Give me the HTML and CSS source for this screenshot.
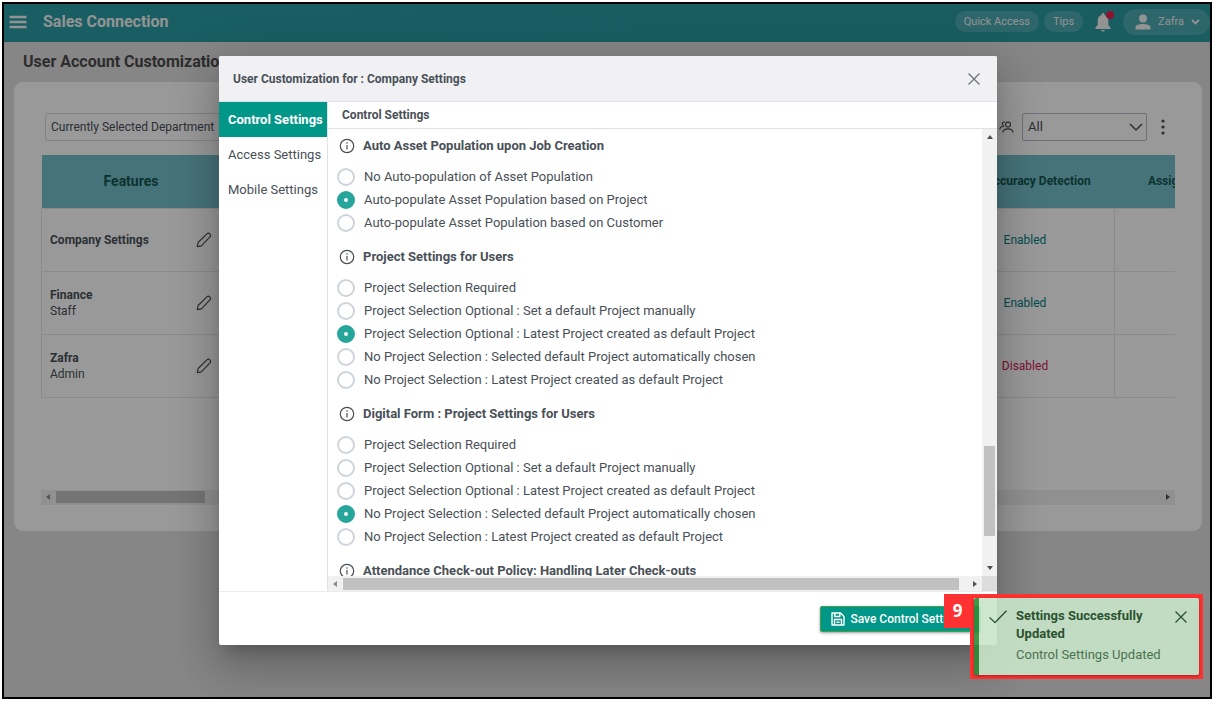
FILE: index.html
```html
<!DOCTYPE html>
<html lang="en">
<head>
<meta charset="utf-8">
<title>Sales Connection</title>
<link rel="stylesheet" href="styles.css">
</head>
<body>
<div class="frame">
  <header class="topbar">
    <button class="icon-btn" aria-label="Menu">
      <svg width="18" height="14" viewBox="0 0 18 14" stroke="currentColor" stroke-width="2.400"><path d="M.5 2h17M.5 7h17M.5 12h17"/></svg>
    </button>
    <span class="brand">Sales Connection</span>
    <nav class="top-actions">
      <button class="pill">Quick Access</button>
      <button class="pill">Tips</button>
      <button class="icon-btn bell" aria-label="Notifications">
        <svg width="18" height="20" viewBox="0 0 18 20" fill="currentColor"><path d="M9 1c.9 0 1.400.6 1.400 1.300v.8c2.600.6 3.900 2.800 3.900 5.400v4.500l2.200 2.500V17h-15v-1.500L3.700 13V8.500c0-2.600 1.300-4.800 3.900-5.400v-.8C7.600 1.600 8.100 1 9 1zM7.200 18h3.600a1.800 1.600 0 0 1-3.600 0z"/></svg>
        <span class="bell-dot"></span>
      </button>
      <button class="pill user">
        <svg width="16" height="16" viewBox="0 0 16 16" fill="currentColor"><circle cx="8" cy="4.500" r="4"/><path d="M0.500 15.500v-2C.5 10.800 4.500 10 8 10s7.500.8 7.500 3.500v2z"/></svg>
        <span>Zafra</span>
        <svg width="9" height="6" viewBox="0 0 9 6" fill="none" stroke="currentColor" stroke-width="1.800"><path d="M1 1l3.500 3.500L8 1"/></svg>
      </button>
    </nav>
  </header>

  <main class="page">
    <h1 class="page-title">User Account Customization</h1>
    <section class="card">
      <div class="filters">
        <button class="department">Currently Selected Department</button>
        <div class="filter-right">
          <svg class="people" width="15" height="13" viewBox="0 0 15 13" fill="none" stroke="currentColor" stroke-width="1.100"><circle cx="9" cy="3.600" r="2.500"/><path d="M3.600 11.500c.6-2.400 2.700-3.600 5.300-3.600s4.700 1.200 5.300 3.600M6 1.200C4.600.5 3.200 1.300 3.200 2.700c0 1 .7 1.800 1.800 2M.6 8.300C1 6.500 2.600 5.300 4.800 5.500"/></svg>
          <div class="select-wrap">
            <select class="select" aria-label="Users"><option>All</option></select>
            <svg class="select-arrow" width="14" height="9" viewBox="0 0 14 9" fill="none" stroke="currentColor" stroke-width="1.500"><path d="M1 1l6 6 6-6"/></svg>
          </div>
          <button class="icon-btn dark" aria-label="More">
            <svg width="4" height="16" viewBox="0 0 4 16" fill="currentColor"><circle cx="2" cy="2" r="1.600"/><circle cx="2" cy="8" r="1.600"/><circle cx="2" cy="14" r="1.600"/></svg>
          </button>
        </div>
      </div>
      <div class="table-wrap">
        <table class="grid">
          <colgroup><col class="col"><col class="col-wide"><col class="col"><col class="col"></colgroup>
          <thead>
            <tr><th class="features">Features</th><th></th><th>GPS Accuracy Detection</th><th>Assigned Customers</th></tr>
          </thead>
          <tbody>
            <tr>
              <td><div class="feature"><div><b>Company Settings</b></div><button class="icon-btn dark" aria-label="Edit Company Settings"><svg width="16" height="16" viewBox="0 0 16 16" fill="none" stroke="currentColor" stroke-width="1.200" stroke-linejoin="round"><path d="M1.300 14.700l.8-4.200 8.800-8.600c2-1.800 4.800.9 3 3L5.400 13.800z"/></svg></button></div></td>
              <td></td><td class="on">Enabled</td><td></td>
            </tr>
            <tr>
              <td><div class="feature"><div><b>Finance</b><br>Staff</div><button class="icon-btn dark" aria-label="Edit Finance"><svg width="16" height="16" viewBox="0 0 16 16" fill="none" stroke="currentColor" stroke-width="1.200" stroke-linejoin="round"><path d="M1.300 14.700l.8-4.200 8.800-8.600c2-1.800 4.800.9 3 3L5.400 13.800z"/></svg></button></div></td>
              <td></td><td class="on">Enabled</td><td></td>
            </tr>
            <tr>
              <td><div class="feature"><div><b>Zafra</b><br>Admin</div><button class="icon-btn dark" aria-label="Edit Zafra"><svg width="16" height="16" viewBox="0 0 16 16" fill="none" stroke="currentColor" stroke-width="1.200" stroke-linejoin="round"><path d="M1.300 14.700l.8-4.200 8.800-8.600c2-1.800 4.800.9 3 3L5.400 13.800z"/></svg></button></div></td>
              <td></td><td class="off">Disabled</td><td></td>
            </tr>
          </tbody>
        </table>
      </div>
      <div class="scroll-x page-scroll">
        <span class="arrow left"></span><span class="thumb"></span><span class="arrow right"></span>
      </div>
    </section>
  </main>

  <div class="backdrop">
    <div class="dialog" role="dialog" aria-labelledby="dialog-title">
      <header class="dialog-head">
        <h2 class="dialog-title" id="dialog-title">User Customization for : Company Settings</h2>
        <button class="icon-btn close" aria-label="Close"><svg width="12" height="12" viewBox="0 0 12 12" stroke="currentColor" stroke-width="1.300"><path d="M.5.5l11 11M11.500.5l-11 11"/></svg></button>
      </header>
      <div class="dialog-body">
        <nav class="tabs">
          <button class="tab active">Control Settings</button>
          <button class="tab">Access Settings</button>
          <button class="tab">Mobile Settings</button>
        </nav>
        <div class="panel">
          <h3 class="panel-title">Control Settings</h3>
          <div class="panel-view">
            <div class="options">
              <section>
                <h4 class="group-title"><svg width="16" height="16" viewBox="0 0 16 16" fill="none" stroke="currentColor" stroke-width="1.200"><circle cx="8" cy="8" r="6.700"/><path d="M8 7v4.500M8 4.300v1.400"/></svg>Auto Asset Population upon Job Creation</h4>
                <div class="group">
                  <label class="option"><input type="radio" name="asset">No Auto-population of Asset Population</label>
                  <label class="option"><input type="radio" name="asset" checked>Auto-populate Asset Population based on Project</label>
                  <label class="option"><input type="radio" name="asset">Auto-populate Asset Population based on Customer</label>
                </div>
              </section>
              <section>
                <h4 class="group-title"><svg width="16" height="16" viewBox="0 0 16 16" fill="none" stroke="currentColor" stroke-width="1.200"><circle cx="8" cy="8" r="6.700"/><path d="M8 7v4.500M8 4.300v1.400"/></svg>Project Settings for Users</h4>
                <div class="group">
                  <label class="option"><input type="radio" name="project">Project Selection Required</label>
                  <label class="option"><input type="radio" name="project">Project Selection Optional : Set a default Project manually</label>
                  <label class="option"><input type="radio" name="project" checked>Project Selection Optional : Latest Project created as default Project</label>
                  <label class="option"><input type="radio" name="project">No Project Selection : Selected default Project automatically chosen</label>
                  <label class="option"><input type="radio" name="project">No Project Selection : Latest Project created as default Project</label>
                </div>
              </section>
              <section>
                <h4 class="group-title"><svg width="16" height="16" viewBox="0 0 16 16" fill="none" stroke="currentColor" stroke-width="1.200"><circle cx="8" cy="8" r="6.700"/><path d="M8 7v4.500M8 4.300v1.400"/></svg>Digital Form : Project Settings for Users</h4>
                <div class="group">
                  <label class="option"><input type="radio" name="form">Project Selection Required</label>
                  <label class="option"><input type="radio" name="form">Project Selection Optional : Set a default Project manually</label>
                  <label class="option"><input type="radio" name="form">Project Selection Optional : Latest Project created as default Project</label>
                  <label class="option"><input type="radio" name="form" checked>No Project Selection : Selected default Project automatically chosen</label>
                  <label class="option"><input type="radio" name="form">No Project Selection : Latest Project created as default Project</label>
                </div>
              </section>
              <section>
                <h4 class="group-title"><svg width="16" height="16" viewBox="0 0 16 16" fill="none" stroke="currentColor" stroke-width="1.200"><circle cx="8" cy="8" r="6.700"/><path d="M8 7v4.500M8 4.300v1.400"/></svg>Attendance Check-out Policy: Handling Later Check-outs</h4>
              </section>
            </div>
            <div class="scroll-y"><span class="arrow up"></span><span class="thumb"></span><span class="arrow down"></span></div>
            <div class="scroll-x"><span class="arrow left"></span><span class="thumb"></span><span class="arrow right"></span></div>
            <div class="corner"></div>
          </div>
        </div>
      </div>
      <footer class="dialog-foot">
        <button class="save"><svg width="14" height="14" viewBox="0 0 14 14" fill="none" stroke="currentColor" stroke-width="1.400" stroke-linejoin="round"><path d="M1 1h8.500L13 4.500V13H1zM3.800 1v3.500h5V1M3.500 13V7.500h7V13M5.500 10.300h3"/></svg>Save Control Settings</button>
      </footer>
    </div>
  </div>

  <div class="callout">
    <span class="callout-number">9</span>
    <div class="toast" role="status">
      <svg class="toast-check" width="18" height="14" viewBox="0 0 18 14" fill="none" stroke="currentColor" stroke-width="1.300"><path d="M.5 7.500l5.500 5L17.500.8"/></svg>
      <div class="toast-text">
        <div class="toast-title">Settings Successfully Updated</div>
        <div class="toast-detail">Control Settings Updated</div>
      </div>
      <button class="icon-btn toast-close" aria-label="Dismiss"><svg width="12" height="12" viewBox="0 0 12 12" stroke="currentColor" stroke-width="1.300"><path d="M.5.5l11 11M11.500.5l-11 11"/></svg></button>
    </div>
  </div>
</div>
</body>
</html>
```
FILE: styles.css
```css
* { box-sizing: border-box; }

body {
  margin: 0;
  padding: 2px 3px 5px 2px;
  background: #fff;
  color: #495057;
  font: 13px/18px Roboto, sans-serif;
}

button, select, input { font: inherit; color: inherit; margin: 0; }
button { border: 0; background: none; padding: 0; }
svg { display: block; flex: none; }
h1, h2, h3, h4 { margin: 0; }

.frame {
  position: relative;
  min-height: calc(100vh - 7px);
  border: 2px solid #000;
  background: #dfdfdf;
  overflow: hidden;
}

.icon-btn { display: flex; align-items: center; justify-content: center; }
.dark { color: #4a4f55; }

/* Top bar */
.topbar {
  display: flex;
  align-items: center;
  height: 38px;
  padding: 0 0 3px 5px;
  gap: 16px;
  background: linear-gradient(90deg, #2a9da5, #2a9ba0);
  color: #f5f5f5;
}
.brand { font-size: 16px; font-weight: 700; }
.top-actions { display: flex; align-items: center; gap: 5px; margin-left: auto; }
.pill {
  height: 21px;
  padding: 0 9px;
  border-radius: 13px;
  background: #4bacb2;
  font-size: 11px;
  line-height: 21px;
}
.bell { position: relative; width: 30px; }
.bell-dot {
  position: absolute;
  top: -1px;
  right: 4px;
  width: 8px;
  height: 8px;
  border-radius: 50%;
  background: #e91e50;
}
.user { display: flex; align-items: center; gap: 7px; height: 26px; padding: 0 10px 0 12px; }

/* Page */
.page { padding: 10px 8px 0 10px; }
.page-title { padding-left: 9px; font-size: 16px; line-height: 20px; font-weight: 700; color: #4b4b4b; }
.card {
  margin-top: 10px;
  padding: 31px 27px 26px;
  border-radius: 9px;
  background: #fff;
}
.filters { display: flex; justify-content: space-between; margin-left: 4px; }
.department {
  width: 360px;
  height: 28px;
  padding: 0 5px;
  border: 1px solid #dadada;
  border-radius: 3px;
  font-size: 12px;
  text-align: left;
}
.filter-right { display: flex; align-items: center; gap: 8px; padding-right: 10px; }
.select-wrap { position: relative; }
.select {
  display: block;
  appearance: none;
  width: 125px;
  height: 28px;
  padding: 0 5px;
  border: 1px solid #b6bcc6;
  border-radius: 2px;
  background: none;
}
.select-arrow { position: absolute; right: 4px; top: 10px; color: #4a4f55; }
.filter-right .icon-btn { margin-left: 6px; }

.table-wrap { margin-top: 14px; overflow: hidden; }
.grid { width: 1252px; table-layout: fixed; border-collapse: collapse; }
.col { width: 179px; }
.col-wide { width: 715px; }
.grid th {
  height: 53px;
  padding: 0;
  background: #75c0cb;
  color: #14554f;
  font-size: 12px;
  font-weight: 700;
}
.grid th.features { font-size: 14px; }
.grid td {
  height: 63px;
  padding: 0 8px;
  border: 1px solid #e8e8e8;
  font-size: 12px;
  line-height: 16px;
  text-align: center;
}
.feature { display: flex; align-items: center; justify-content: space-between; text-align: left; }
.grid .on { color: #008084; }
.grid .off { color: #d32058; }

/* Drawn scrollbars */
.scroll-x, .scroll-y { display: flex; align-items: center; background: #f1f1f1; }
.scroll-x { height: 15px; }
.scroll-y { flex-direction: column; width: 15px; }
.thumb { background: #c1c1c1; }
.arrow { flex: none; border: 3px solid transparent; }
.arrow.left { border-left: 0; border-right: 4px solid #8a8a8a; margin: 0 6px 0 5px; }
.arrow.right { border-right: 0; border-left: 4px solid #505050; margin: 0 5px 0 auto; }
.arrow.up { border-top: 0; border-bottom: 4px solid #505050; margin-top: 6px; }
.arrow.down { border-bottom: 0; border-top: 4px solid #505050; margin: auto 0 6px; }
.page-scroll { margin-top: 92px; }
.page-scroll .thumb { width: 149px; height: 12px; }

/* Dialog */
.backdrop {
  position: absolute;
  inset: 0;
  display: flex;
  padding: 52px 213px 52px 215px;
  background: rgba(0, 0, 0, .4);
}
.dialog {
  flex: 1;
  display: flex;
  flex-direction: column;
  min-width: 0;
  border-radius: 2px;
  background: #fff;
  box-shadow: 0 11px 15px -7px rgba(0, 0, 0, .2), 0 24px 38px 3px rgba(0, 0, 0, .14), 0 9px 46px 8px rgba(0, 0, 0, .12);
  overflow: hidden;
}
.dialog-head {
  display: flex;
  align-items: center;
  justify-content: space-between;
  height: 46px;
  padding: 0 17px 0 14px;
  border-bottom: 1px solid #dfe3ed;
  background: #f1f1f4;
}
.dialog-title { font-size: 12px; font-weight: 700; }
.close { color: #6c757d; }
.dialog-body { flex: 1; display: flex; min-height: 0; }
.tabs { display: flex; flex-direction: column; width: 108px; }
.tab { height: 35px; padding-left: 9px; text-align: left; white-space: nowrap; }
.tab.active { background: #009688; color: #fff; font-weight: 700; }
.panel { flex: 1; display: flex; flex-direction: column; min-width: 0; border-left: 1px solid #dee2e6; }
.panel-title {
  height: 27px;
  padding-left: 14px;
  border-bottom: 1px solid #dee2e6;
  font-size: 12px;
  line-height: 26px;
}
.panel-view { flex: 1; display: grid; grid-template: 1fr 15px / 1fr 15px; min-height: 0; }
.options { min-height: 0; overflow: hidden; padding-left: 9px; white-space: nowrap; }
.group-title { display: flex; align-items: center; gap: 8px; height: 34px; padding-left: 2px; font-size: 13px; }
.group { padding: 2px 0 6px; }
.option { display: flex; align-items: center; gap: 9px; height: 23px; font-size: 13px; }
.option input {
  appearance: none;
  width: 18px;
  height: 18px;
  border: 2px solid #ced4da;
  border-radius: 50%;
  background: #fff;
}
.option input:checked { border: 7px solid #26a69a; }
.panel-view .scroll-y .thumb { width: 11px; height: 90px; margin-top: auto; }
.panel-view .scroll-y .arrow.down { margin-top: 30px; }
.panel-view .scroll-x .thumb { flex: 1; height: 12px; }
.panel-view .scroll-x .arrow.right { margin-left: 14px; }
.corner { background: #dcdcdc; }
.dialog-foot {
  display: flex;
  align-items: center;
  justify-content: flex-end;
  height: 54px;
  padding-right: 16px;
  border-top: 1px solid #e9ecf3;
}
.save {
  display: flex;
  align-items: center;
  gap: 5px;
  height: 26px;
  padding: 0 14px 0 10px;
  border: 1px solid #43a047;
  border-radius: 2px;
  background: #009688;
  color: #fff;
  font-size: 12px;
  font-weight: 500;
  white-space: nowrap;
  box-shadow: 0 1px 3px rgba(0, 0, 0, .4);
}

/* Toast with numbered callout */
.callout {
  position: absolute;
  right: 7px;
  bottom: 18px;
  width: 233px;
  border: 4px solid #ff3131;
}
.callout-number {
  position: absolute;
  top: -4px;
  left: -30px;
  width: 27px;
  height: 34px;
  background: #ff3131;
  color: #fff;
  font: 700 17px/34px "Open Sans", sans-serif;
  text-align: center;
}
.toast {
  display: flex;
  align-items: flex-start;
  gap: 9px;
  min-height: 77px;
  padding: 9px 12px 9px 10px;
  border-left: 5px solid #2e8b37;
  border-radius: 2px;
  background: #c8e6c9;
  color: #224d26;
  box-shadow: 0 1px 3px rgba(0, 0, 0, .4);
  opacity: .9;
}
.toast-check { margin-top: 3px; }
.toast-text { flex: 1; }
.toast-title { font-weight: 700; }
.toast-detail { margin-top: 3px; color: #45714a; white-space: nowrap; }
.toast-close { margin-top: 4px; }
```
